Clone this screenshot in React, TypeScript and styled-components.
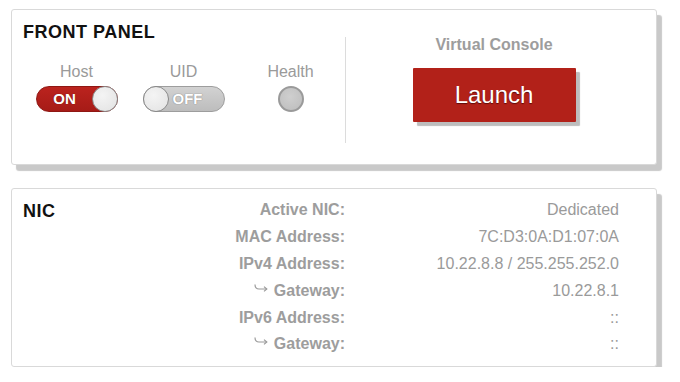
import React from "react";
import styled, { createGlobalStyle } from "styled-components";

const Global = createGlobalStyle`
  html, body { margin: 0; padding: 0; background: #ffffff; }
  body { font-family: "Liberation Sans", Arial, sans-serif; }
`;

const Page = styled.div`
  display: flex;
  flex-direction: column;
  gap: 23px;
  padding: 9px 0 0 11px;
  width: 646px;
`;

const Panel = styled.section`
  box-sizing: border-box;
  width: 646px;
  background: #ffffff;
  border: 1px solid #d9d9d9;
  border-radius: 3px;
  box-shadow: 5px 6px 1px #c9c9c9;
`;

const FrontPanel = styled(Panel)`
  height: 156px;
  display: flex;
`;

const LeftSection = styled.div`
  box-sizing: border-box;
  width: 333px;
  padding: 12px 0 0 11px;
  display: flex;
  flex-direction: column;
`;

const Title = styled.h2`
  margin: 0;
  font-size: 18px;
  line-height: 20px;
  font-weight: bold;
  color: #111;
  letter-spacing: 0.5px;
`;

const Controls = styled.div`
  display: flex;
  margin-top: 21px;
`;

const Control = styled.div`
  width: 107px;
  display: flex;
  flex-direction: column;
  align-items: center;
  gap: 5px;
`;

const ControlLabel = styled.div`
  font-size: 16px;
  line-height: 18px;
  color: #9a9a9a;
`;

const Toggle = styled.div<{ $on: boolean }>`
  box-sizing: border-box;
  width: 82px;
  height: 26px;
  border-radius: 13px;
  display: flex;
  align-items: center;
  flex-direction: ${(p) => (p.$on ? "row" : "row-reverse")};
  background: ${(p) =>
    p.$on
      ? "linear-gradient(#bb231e, #a61b17)"
      : "linear-gradient(#d2d2d2, #bdbdbd)"};
  border: 1px solid ${(p) => (p.$on ? "#8f1713" : "#9d9d9d")};
`;

const ToggleText = styled.span<{ $on: boolean }>`
  flex: 1;
  text-align: center;
  font-size: 15px;
  font-weight: bold;
  line-height: 24px;
  color: #ffffff;
  padding-right: ${(p) => (p.$on ? "0" : "16px")};
  text-shadow: ${(p) => (p.$on ? "0 0 1px #6a0d0a" : "0 0 1px #888, 0 0 1px #888")};
`;

const Knob = styled.span`
  box-sizing: border-box;
  width: 26px;
  height: 26px;
  margin: -1px;
  border-radius: 50%;
  background: radial-gradient(circle at 40% 35%, #f4f4f4, #e2e2e2);
  border: 1px solid #8a8a8a;
`;

const Led = styled.div`
  box-sizing: border-box;
  width: 26px;
  height: 26px;
  border-radius: 50%;
  background: radial-gradient(circle at 45% 40%, #cfcfcf, #bcbcbc);
  border: 2px solid #9a9a9a;
`;

const Divider = styled.div`
  width: 1px;
  background: #dcdcdc;
  margin: 27px 0 21px;
`;

const RightSection = styled.div`
  width: 296px;
  padding-top: 26px;
  display: flex;
  flex-direction: column;
  align-items: center;
  gap: 14px;
`;

const ConsoleLabel = styled.div`
  font-size: 16px;
  line-height: 18px;
  font-weight: bold;
  color: #9d9d9d;
`;

const LaunchButton = styled.button`
  width: 163px;
  height: 54px;
  border: none;
  border-radius: 1px;
  background: #b22119;
  color: #fff;
  font-family: "Liberation Sans", Arial, sans-serif;
  font-size: 24px;
  cursor: pointer;
  box-shadow: 4px 4px 1px #bdbdbd;
  text-shadow: 0 1px 1px rgba(60, 0, 0, 0.7);
`;

const NicPanel = styled(Panel)`
  display: grid;
  grid-template-columns: 80px 242px 274px;
  grid-auto-rows: 26.8px;
  padding: 8px 38px 8px 11px;
  align-items: center;
`;

const NicTitle = styled(Title)`
  grid-column: 1;
  grid-row: 1;
  padding-top: 2px;
`;

const Label = styled.div`
  grid-column: 2;
  text-align: right;
  font-size: 16px;
  font-weight: bold;
  color: #9d9d9d;
  white-space: nowrap;
`;

const Value = styled.div`
  grid-column: 3;
  text-align: right;
  font-size: 16px;
  color: #9a9a9a;
  white-space: nowrap;
`;

const Hook = styled.svg`
  width: 14px;
  height: 9px;
  margin-right: 6px;
  vertical-align: 3px;
`;

const HookArrow = () => (
  <Hook viewBox="0 0 14 9" fill="none" stroke="#9a9a9a" strokeWidth="1.2">
    <path d="M1 0.5 C1 3.5 2.5 5 5 5 L12.5 5" />
    <path d="M10 2.6 L12.8 5 L10 7.4" />
  </Hook>
);

const rows: { label: React.ReactNode; value: string; key: string }[] = [
  { key: "a", label: "Active NIC:", value: "Dedicated" },
  { key: "b", label: "MAC Address:", value: "7C:D3:0A:D1:07:0A" },
  { key: "c", label: "IPv4 Address:", value: "10.22.8.8 / 255.255.252.0" },
  {
    key: "d",
    label: (
      <>
        <HookArrow />
        Gateway:
      </>
    ),
    value: "10.22.8.1",
  },
  { key: "e", label: "IPv6 Address:", value: "::" },
  {
    key: "f",
    label: (
      <>
        <HookArrow />
        Gateway:
      </>
    ),
    value: "::",
  },
];

export default function App() {
  return (
    <>
      <Global />
      <Page>
        <FrontPanel>
          <LeftSection>
            <Title>FRONT PANEL</Title>
            <Controls>
              <Control>
                <ControlLabel>Host</ControlLabel>
                <Toggle $on>
                  <ToggleText $on>ON</ToggleText>
                  <Knob />
                </Toggle>
              </Control>
              <Control>
                <ControlLabel>UID</ControlLabel>
                <Toggle $on={false}>
                  <ToggleText $on={false}>OFF</ToggleText>
                  <Knob />
                </Toggle>
              </Control>
              <Control>
                <ControlLabel>Health</ControlLabel>
                <Led />
              </Control>
            </Controls>
          </LeftSection>
          <Divider />
          <RightSection>
            <ConsoleLabel>Virtual Console</ConsoleLabel>
            <LaunchButton>Launch</LaunchButton>
          </RightSection>
        </FrontPanel>
        <NicPanel>
          <NicTitle>NIC</NicTitle>
          {rows.map((r) => (
            <React.Fragment key={r.key}>
              <Label>{r.label}</Label>
              <Value>{r.value}</Value>
            </React.Fragment>
          ))}
        </NicPanel>
      </Page>
    </>
  );
}
